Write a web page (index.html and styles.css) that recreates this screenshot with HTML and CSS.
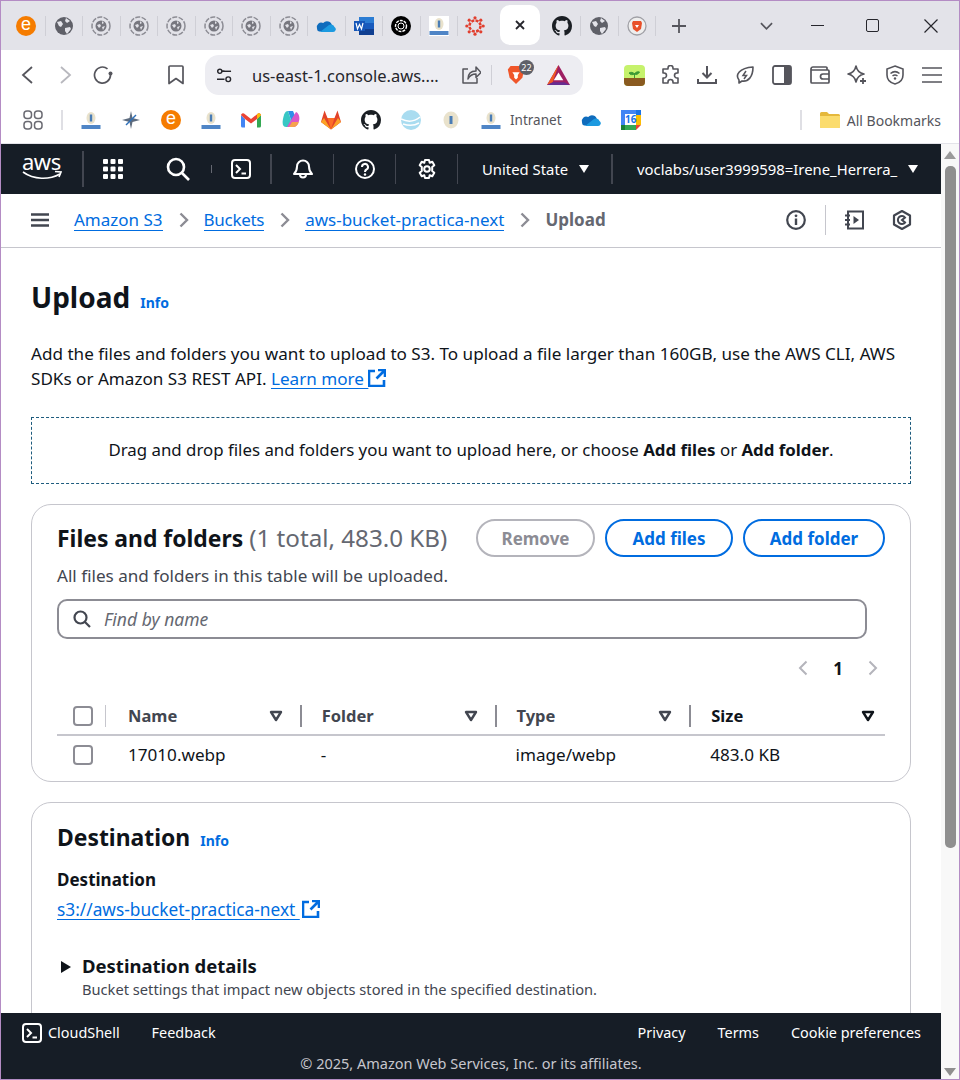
FILE: index.html
```html
<!DOCTYPE html>
<html>

<head>
    <meta charset="utf-8">
    <title>Upload</title>
    <link rel="stylesheet" href="styles.css">
</head>

<body>
    <svg class="sprites" width="0" height="0">
        <symbol id="globe" viewBox="0 0 20 20"><circle cx="10" cy="10" r="9" fill="#5f6068"/><path d="M3 6l4-1 2 3-2 3-2-1zM12 2l4 3-3 2-2-2zM11 12l5-1 1 2-4 5-2-3z" fill="#e3e3e9"/></symbol>
        <symbol id="sleep" viewBox="0 0 20 20"><circle cx="10" cy="10" r="9" fill="none" stroke="#8c8c94" stroke-width="1.500" stroke-dasharray="5 1.400"/><circle cx="10" cy="10" r="5.500" fill="#77777f"/><path d="M6 9l3-1 1 2-2 2zM11 5l2 2-2 1zM11 11l3-1-2 4z" fill="#e3e3e9"/></symbol>
        <symbol id="github" viewBox="0 0 16 16"><path fill="#1b1f24" d="M8 0C3.58 0 0 3.58 0 8c0 3.54 2.29 6.53 5.47 7.59.4.07.55-.17.55-.38 0-.19-.01-.82-.01-1.49-2.01.37-2.53-.49-2.69-.94-.09-.23-.48-.94-.82-1.13-.28-.15-.68-.52-.01-.53.63-.01 1.08.58 1.23.82.72 1.21 1.87.87 2.33.66.07-.52.28-.87.51-1.07-1.78-.2-3.64-.89-3.64-3.95 0-.87.31-1.59.82-2.15-.08-.2-.36-1.02.08-2.12 0 0 .67-.21 2.2.82.64-.18 1.32-.27 2-.27.68 0 1.36.09 2 .27 1.53-1.04 2.2-.82 2.2-.82.44 1.1.16 1.92.08 2.12.51.56.82 1.27.82 2.15 0 3.07-1.87 3.75-3.65 3.95.29.25.54.73.54 1.48 0 1.07-.01 1.93-.01 2.2 0 .21.15.46.55.38A8.013 8.013 0 0016 8c0-4.42-3.58-8-8-8z"/></symbol>
        <symbol id="onedrive" viewBox="0 0 20 14"><path fill="#0f6cbd" d="M8 12.500l8-6a5 5 0 0 0-8.800-2.500A4.500 4.500 0 0 0 1 9.500 3 3 0 0 0 3 12.500z"/><path fill="#1c9ae0" d="M4 13h13a2.700 2.700 0 0 0 1.500-5 4 4 0 0 0-5.500-2z"/></symbol>
        <symbol id="upm" viewBox="0 0 20 20"><rect width="20" height="20" fill="#fff"/><ellipse cx="10" cy="8" rx="4.500" ry="6" fill="#e9e2cc"/><rect x="8.800" y="4.500" width="2.400" height="7" fill="#4a7db5"/><rect x="0.500" y="15" width="19" height="4" fill="#4f85c6"/></symbol>
        <symbol id="crest" viewBox="0 0 20 20"><ellipse cx="10" cy="10" rx="7.500" ry="8.500" fill="#e9e2cc"/><rect x="8.500" y="6" width="3" height="8" fill="#4a7db5"/></symbol>
        <symbol id="shell" viewBox="0 0 20 20"><rect x="1" y="1" width="18" height="18" rx="3" fill="none" stroke="currentColor" stroke-width="2"/><path d="M5 6l4 4-4 4M10.500 14.500h4.500" fill="none" stroke="currentColor" stroke-width="2"/></symbol>
        <symbol id="external" viewBox="0 0 18 18"><path d="M7 2H1v15h15v-6M10 1h7v7M16.500 1.500L8.500 9.500" fill="none" stroke="#006ce0" stroke-width="2.600"/></symbol>
        <symbol id="sort" viewBox="0 0 14 12"><path d="M2 2h10l-5 8z" fill="none" stroke="currentColor" stroke-width="2.400" stroke-linejoin="round"/></symbol>
    </svg>

    <div class="browser">
        <div class="tabstrip">
            <div class="tab first"><span class="favicon-e">e</span></div>
            <div class="tab"><svg class="ico20"><use href="#globe"/></svg></div>
            <div class="tab"><svg class="ico20"><use href="#sleep"/></svg></div>
            <div class="tab"><svg class="ico20"><use href="#sleep"/></svg></div>
            <div class="tab"><svg class="ico20"><use href="#sleep"/></svg></div>
            <div class="tab"><svg class="ico20"><use href="#sleep"/></svg></div>
            <div class="tab"><svg class="ico20"><use href="#sleep"/></svg></div>
            <div class="tab"><svg class="ico20"><use href="#sleep"/></svg></div>
            <div class="tab"><svg class="ico20 short"><use href="#onedrive"/></svg></div>
            <div class="tab">
                <svg class="ico20" viewBox="0 0 20 20"><rect x="5" y="1" width="15" height="18" fill="#2b7cd3"/><rect x="5" y="7" width="15" height="6" fill="#185abd"/><rect x="5" y="13" width="15" height="6" fill="#103f91"/><rect x="0" y="5" width="11" height="10" fill="#1656b8"/><path d="M2 7l1.500 6 2-4.500 2 4.500L9 7" fill="none" stroke="#fff" stroke-width="1.200"/></svg>
            </div>
            <div class="tab">
                <svg class="ico20" viewBox="0 0 20 20"><circle cx="10" cy="10" r="10" fill="#000"/><circle cx="10" cy="10" r="5.500" fill="none" stroke="#fff" stroke-width="1.400" stroke-dasharray="3 1"/><circle cx="10" cy="10" r="3" fill="none" stroke="#fff"/></svg>
            </div>
            <div class="tab"><svg class="ico20"><use href="#upm"/></svg></div>
            <div class="tab no-line">
                <svg class="ico20" viewBox="0 0 20 20"><circle cx="10" cy="10" r="5.500" fill="none" stroke="#e13f2f" stroke-width="2.600" stroke-dasharray="3 1.300"/><circle cx="10" cy="1.800" r="1.600" fill="#e13f2f"/><circle cx="10" cy="18.200" r="1.600" fill="#e13f2f"/><circle cx="1.800" cy="10" r="1.600" fill="#e13f2f"/><circle cx="18.200" cy="10" r="1.600" fill="#e13f2f"/><circle cx="4.200" cy="4.200" r="1.600" fill="#e13f2f"/><circle cx="15.800" cy="4.200" r="1.600" fill="#e13f2f"/><circle cx="4.200" cy="15.800" r="1.600" fill="#e13f2f"/><circle cx="15.800" cy="15.800" r="1.600" fill="#e13f2f"/></svg>
            </div>
            <div class="tab active">
                <svg class="ico10" viewBox="0 0 10 10"><path d="M1 1l8 8M9 1l-8 8" stroke="#26262c" stroke-width="1.800"/></svg>
            </div>
            <div class="tab after-active"><svg class="ico20"><use href="#github"/></svg></div>
            <div class="tab"><svg class="ico20"><use href="#globe"/></svg></div>
            <div class="tab">
                <svg class="ico20" viewBox="0 0 20 20"><circle cx="10" cy="10" r="9" fill="#eee" stroke="#a0a0a6" stroke-width="1.300"/><path d="M6 5h8l1 2-1 6-4 3-4-3-1-6z" fill="#e8502a"/><path d="M8 9h4l-2 3z" fill="#fff"/></svg>
            </div>
            <div class="new-tab">
                <svg class="ico14" viewBox="0 0 14 14"><path d="M7 0v14M0 7h14" stroke="#55555c" stroke-width="1.800"/></svg>
            </div>
            <div class="window-controls">
                <svg class="win-chevron" viewBox="0 0 14 8"><path d="M1 1l6 6 6-6" fill="none" stroke="#55555c" stroke-width="1.800"/></svg>
                <span class="win-min"></span>
                <span class="win-max"></span>
                <svg class="win-close" viewBox="0 0 14 14"><path d="M.5.5l13 13M13.500.5l-13 13" stroke="#26262c" stroke-width="1.200"/></svg>
            </div>
        </div>

        <div class="toolbar">
            <div class="tool"><svg class="ico20" viewBox="0 0 20 20"><path d="M14 2L5 10l9 8" fill="none" stroke="#55555c" stroke-width="1.800"/></svg></div>
            <div class="tool"><svg class="ico20" viewBox="0 0 20 20"><path d="M6 2l9 8-9 8" fill="none" stroke="#b8b8be" stroke-width="1.800"/></svg></div>
            <div class="tool"><svg class="ico20" viewBox="0 0 20 20"><path d="M17.500 10a8 8 0 1 1-3-6.200" fill="none" stroke="#55555c" stroke-width="1.700"/><circle cx="17.500" cy="8.500" r="2" fill="#55555c"/></svg></div>
            <div class="tool bookmark-star"><svg class="ico20" viewBox="0 0 20 20"><path d="M4 1.500h12a1 1 0 0 1 1 1V19l-7-5-7 5V2.500a1 1 0 0 1 1-1z" fill="none" stroke="#55555c" stroke-width="1.700" stroke-linejoin="round" transform="translate(0 -.500)"/></svg></div>
            <div class="omnibox">
                <svg class="tune" viewBox="0 0 18 16"><path d="M1 3.500h8M1 12h8" stroke="#26262c" stroke-width="1.500" fill="none"/><circle cx="4" cy="3.500" r="2.200" fill="#ededf2" stroke="#26262c" stroke-width="1.500"/><circle cx="13" cy="12" r="2.500" fill="#ededf2" stroke="#26262c" stroke-width="1.500"/><path d="M6 3.500h10" stroke="#26262c" stroke-width="1.500"/></svg>
                <span class="url">us-east-1.console.aws....</span>
                <svg class="share" viewBox="0 0 20 20"><path d="M7 4H2v14h14v-5M7 14c0-5 3-8 8-8V2l5 5.500-5 5V9c-3 0-6 1-8 5z" fill="none" stroke="#55555c" stroke-width="1.500" stroke-linejoin="round"/></svg>
                <span class="omni-sep"></span>
                <div class="brave-shield">
                    <svg class="ico20 lion" viewBox="0 0 20 22"><path d="M4 1h12l3 4-2 9-7 7-7-7-2-9z" fill="#f0562a"/><path d="M6 8h8l-2 3v3l-2 2-2-2v-3z" fill="#fff"/></svg>
                    <span class="badge">22</span>
                </div>
                <svg class="bat" viewBox="0 0 24 21"><path d="M12 0l12 21H0z" fill="#9e1f63"/><path d="M12 0L0 21l6-3z" fill="#f15a22"/><path d="M0 21h24l-6-3H6z" fill="#662d91"/><path d="M12 8l5 8H7z" fill="#fff"/></svg>
            </div>
            <div class="forest">
                <svg class="ico20" viewBox="0 0 21 21"><rect width="21" height="21" rx="4" fill="#c6f26c"/><path d="M0 13h21v4a4 4 0 0 1-4 4H4a4 4 0 0 1-4-4z" fill="#8a5a20"/><path d="M10.500 13V8M10.500 9C9 7 6.500 7 5 8c1 2 4 2 5.500 1zM10.500 9c1-2 3-2.500 5-2-1 2-3 3-5 2z" fill="#3c9a35" stroke="#3c9a35"/></svg>
            </div>
            <div class="tool ext puzzle"><svg class="ico20" viewBox="0 0 20 20"><path d="M7 3a2.500 2.500 0 0 1 5 0v1h5v4h-1a2.500 2.500 0 0 0 0 5h1v5h-5v-1a2.500 2.500 0 0 0-5 0v1H2v-5h1a2.500 2.500 0 0 0 0-5H2V4h5z" fill="none" stroke="#55555c" stroke-width="1.600" stroke-linejoin="round"/></svg></div>
            <div class="tool ext"><svg class="ico20" viewBox="0 0 20 20"><path d="M10 1v11M5.500 8l4.500 4.500L14.500 8M1 14v4h18v-4" fill="none" stroke="#55555c" stroke-width="2"/></svg></div>
            <div class="tool ext"><svg class="ico20" viewBox="0 0 20 20"><path d="M4 15C0 10 4 3 18 2c0 10-5 15-11 14l-3 2z" fill="none" stroke="#55555c" stroke-width="1.600" stroke-linejoin="round"/><path d="M11 6l-3 4.500h3.500L9 14" fill="none" stroke="#55555c" stroke-width="1.500"/></svg></div>
            <div class="tool ext"><svg class="ico20" viewBox="0 0 20 20"><rect x="1" y="1" width="18" height="18" rx="2" fill="none" stroke="#55555c" stroke-width="1.800"/><rect x="12" y="1" width="7" height="18" fill="#55555c"/></svg></div>
            <div class="tool ext"><svg class="ico20" viewBox="0 0 20 20"><path d="M17 5V3a1 1 0 0 0-1-1H3a2 2 0 0 0-2 2v13a1 1 0 0 0 1 1h16a1 1 0 0 0 1-1V6a1 1 0 0 0-1-1H1M19 9h-6a2 2 0 0 0 0 5h6" fill="none" stroke="#55555c" stroke-width="1.700"/></svg></div>
            <div class="tool ext"><svg class="ico20" viewBox="0 0 20 20"><path d="M9 1c1 5 3 7 8 8-5 1-7 3-8 8-1-5-3-7-8-8 5-1 7-3 8-8z" fill="none" stroke="#55555c" stroke-width="1.600" stroke-linejoin="round"/><path d="M16 13v6M13 16h6" stroke="#55555c" stroke-width="1.800"/></svg></div>
            <div class="tool ext"><svg class="ico20" viewBox="0 0 20 20"><path d="M10 1l8 3v6c0 5-4 8-8 9-4-1-8-4-8-9V4z" fill="none" stroke="#55555c" stroke-width="1.600"/><path d="M5.500 8.500c3-2.500 6-2.500 9 0M7.500 11c1.500-1.200 3.500-1.200 5 0" fill="none" stroke="#55555c" stroke-width="1.500"/><circle cx="10" cy="13.500" r="1.200" fill="#55555c"/></svg></div>
            <div class="tool ext"><svg class="ico20" viewBox="0 0 20 20"><path d="M0 3h20M0 10h20M0 17h20" stroke="#55555c" stroke-width="1.700"/></svg></div>
        </div>

        <div class="bookmarks">
            <div class="apps">
                <svg class="ico20" viewBox="0 0 20 20"><g fill="none" stroke="#6a6a72" stroke-width="1.500"><rect x="1" y="1" width="7.500" height="7.500" rx="3"/><rect x="11.500" y="1" width="7.500" height="7.500" rx="3"/><rect x="1" y="11.500" width="7.500" height="7.500" rx="3"/><rect x="11.500" y="11.500" width="7.500" height="7.500" rx="3"/></g></svg>
            </div>
            <span class="bm-sep"></span>
            <div class="bm"><svg class="ico20"><use href="#upm"/></svg></div>
            <div class="bm"><svg class="ico20" viewBox="0 0 20 20"><path d="M10 1l1.500 7L19 10l-7.500 2L10 19l-1.500-7L1 10l7.500-2z" fill="#5d6b7e"/><path d="M5 15L15 5" stroke="#2d6fb8" stroke-width="1.500"/></svg></div>
            <div class="bm"><span class="favicon-e">e</span></div>
            <div class="bm"><svg class="ico20"><use href="#upm"/></svg></div>
            <div class="bm"><svg class="ico20" viewBox="0 0 20 16"><path d="M0 3v11a1.500 1.500 0 0 0 1.500 1.500H4V7z" fill="#4285f4"/><path d="M20 3v11a1.500 1.500 0 0 1-1.500 1.500H16V7z" fill="#34a853"/><path d="M0 3l4 4 6 4.500L16 7l4-4a2 2 0 0 0-3-1.500L10 7 3 1.500A2 2 0 0 0 0 3z" fill="#ea4335"/><path d="M16 7l4-4a2 2 0 0 0-3-1.500L16 2.300z" fill="#fbbc04"/></svg></div>
            <div class="bm"><svg class="ico20" viewBox="0 0 20 20"><path d="M7 1h5l4 9h-6z" fill="#2f8fe8"/><path d="M7 1C4 1 3 4 2 9c-1 5 0 8 3 8h3l2-7z" fill="#38c7c4"/><path d="M15 2c3 1 4 6 3 9-1 4-3 6-6 6H6l4-7z" fill="#d957c8"/><path d="M18 11c-1 4-3 6-6 6H8l3-5h7z" fill="#f6a34c"/></svg></div>
            <div class="bm"><svg class="ico20" viewBox="0 0 20 19"><path d="M10 19L0 11.500 3.500 0 6.500 7.500h7L16.500 0 20 11.500z" fill="#e24329"/><path d="M10 19l-3.500-11.500h7z" fill="#fc6d26"/><path d="M0 11.500L10 19 3 7.500z" fill="#fca326"/><path d="M20 11.500L10 19l7-11.500z" fill="#fca326"/></svg></div>
            <div class="bm"><svg class="ico20"><use href="#github"/></svg></div>
            <div class="bm"><svg class="ico20" viewBox="0 0 20 20"><circle cx="10" cy="10" r="10" fill="#a9dcf0"/><path d="M0 9c6 3 13 3 19-2M2 14c6 2 11 2 16-1" fill="none" stroke="#fff" stroke-width="1.500"/></svg></div>
            <div class="bm"><svg class="ico20"><use href="#crest"/></svg></div>
            <div class="bm intranet"><svg class="ico20"><use href="#upm"/></svg><span>Intranet</span></div>
            <div class="bm"><svg class="ico20 short"><use href="#onedrive"/></svg></div>
            <div class="bm calendar">
                <svg class="ico20" viewBox="0 0 20 20"><rect width="20" height="20" fill="#fff"/><path d="M0 0h15v4H4v12H0z" fill="#4285f4"/><path d="M15 0h5v5h-5z" fill="#1a73e8"/><path d="M15 5h5v10h-5z" fill="#fbbc04"/><path d="M4 15h11v5H4z" fill="#34a853"/><path d="M0 15h4v5H0z" fill="#188038"/><path d="M15 15h5l-5 5z" fill="#ea4335"/></svg>
                <span class="cal-num">16</span>
            </div>
            <span class="bm-sep right"></span>
            <svg class="folder" viewBox="0 0 20 16"><path d="M0 1.500A1.500 1.500 0 0 1 1.500 0H7l2 2h9.500A1.500 1.500 0 0 1 20 3.500v11a1.500 1.500 0 0 1-1.500 1.500h-17A1.500 1.500 0 0 1 0 14.500z" fill="#e5b83c"/><path d="M0 4h20v10.500a1.500 1.500 0 0 1-1.500 1.500h-17A1.500 1.500 0 0 1 0 14.500z" fill="#fbdc6e"/></svg>
            <span class="all-bookmarks">All Bookmarks</span>
        </div>

        <div class="viewport">
            <div class="page">
                <nav class="topnav">
                    <div class="aws-logo">
                        <span>aws</span>
                        <svg viewBox="0 0 40 11"><path d="M1 2c11 8 26 8 37 2" fill="none" stroke="#fff" stroke-width="1.600"/><path d="M33 1.500l6 .5-2 5" fill="none" stroke="#fff" stroke-width="1.600"/></svg>
                    </div>
                    <div class="nav-cell grid-cell">
                        <svg class="ico20" viewBox="0 0 20 20"><g fill="#fff"><rect width="5" height="5" rx="1"/><rect x="7.500" width="5" height="5" rx="1"/><rect x="15" width="5" height="5" rx="1"/><rect y="7.500" width="5" height="5" rx="1"/><rect x="7.500" y="7.500" width="5" height="5" rx="1"/><rect x="15" y="7.500" width="5" height="5" rx="1"/><rect y="15" width="5" height="5" rx="1"/><rect x="7.500" y="15" width="5" height="5" rx="1"/><rect x="15" y="15" width="5" height="5" rx="1"/></g></svg>
                    </div>
                    <div class="nav-search">
                        <svg class="search-big" viewBox="0 0 24 24"><circle cx="10" cy="10" r="8" fill="none" stroke="#fff" stroke-width="2.600"/><path d="M16 16l7 7" stroke="#fff" stroke-width="2.600"/></svg>
                        <span class="tiny-sep"></span>
                        <svg class="ico20 on-dark"><use href="#shell"/></svg>
                    </div>
                    <div class="nav-cell lined">
                        <svg class="ico20" viewBox="0 0 20 20"><path d="M10 1.500a6 6 0 0 1 6 6c0 4 1 5.500 3 7.500H1c2-2 3-3.500 3-7.500a6 6 0 0 1 6-6zM7 15.500a3 3 0 0 0 6 0" fill="none" stroke="#fff" stroke-width="2" stroke-linejoin="round"/></svg>
                    </div>
                    <div class="nav-cell lined">
                        <svg class="ico20" viewBox="0 0 20 20"><circle cx="10" cy="10" r="9" fill="none" stroke="#fff" stroke-width="2"/><path d="M7 8a3 3 0 1 1 4.500 2.500C10.500 11 10 11.500 10 13" fill="none" stroke="#fff" stroke-width="2"/><circle cx="10" cy="15.500" r="1.200" fill="#fff"/></svg>
                    </div>
                    <div class="nav-cell lined">
                        <svg class="ico20" viewBox="0 0 20 20"><path d="M8 1h4l.7 2.800 2.600-1 2 3.400-2.100 1.800v4l2.100 1.800-2 3.400-2.600-1L12 19H8l-.7-2.800-2.600 1-2-3.400L4.800 12V8L2.700 6.200l2-3.400 2.600 1z" fill="none" stroke="#fff" stroke-width="2" stroke-linejoin="round"/><circle cx="10" cy="10" r="2.800" fill="none" stroke="#fff" stroke-width="2"/></svg>
                    </div>
                    <div class="nav-menu region">
                        <span>United State</span><i class="nav-caret"></i>
                    </div>
                    <div class="nav-menu user">
                        <span>voclabs/user3999598=Irene_Herrera_</span><i class="nav-caret"></i>
                    </div>
                </nav>

                <div class="crumbbar">
                    <svg class="burger" viewBox="0 0 18 14"><path d="M0 1.500h18M0 7h18M0 12.500h18" stroke="#424650" stroke-width="2.400"/></svg>
                    <a class="crumb">Amazon S3</a>
                    <svg class="crumb-arrow" viewBox="0 0 10 16"><path d="M1.500 1.500L8 8l-6.500 6.500" fill="none" stroke="#8c8c94" stroke-width="2.400"/></svg>
                    <a class="crumb tight">Buckets</a>
                    <svg class="crumb-arrow" viewBox="0 0 10 16"><path d="M1.500 1.500L8 8l-6.500 6.500" fill="none" stroke="#8c8c94" stroke-width="2.400"/></svg>
                    <a class="crumb">aws-bucket-practica-next</a>
                    <svg class="crumb-arrow" viewBox="0 0 10 16"><path d="M1.500 1.500L8 8l-6.500 6.500" fill="none" stroke="#8c8c94" stroke-width="2.400"/></svg>
                    <span class="crumb-current">Upload</span>
                    <div class="crumb-tools">
                        <svg class="ico20" viewBox="0 0 20 20"><circle cx="10" cy="10" r="8.800" fill="none" stroke="#424650" stroke-width="2.200"/><path d="M10 8.500V15" stroke="#424650" stroke-width="2.400"/><circle cx="10" cy="5.800" r="1.400" fill="#424650"/></svg>
                        <span class="tools-sep"></span>
                        <svg class="ico20 notebook" viewBox="0 0 20 20"><path d="M3 1.500h15v17H3zM0 5.500h5M0 10h5M0 14.500h5" fill="none" stroke="#424650" stroke-width="2"/><path d="M8.500 6l5.500 4-5.500 4z" fill="#424650"/></svg>
                        <svg class="ico20 hexagon" viewBox="0 0 20 20"><path d="M10 1l8 4.500v9L10 19l-8-4.500v-9z" fill="none" stroke="#424650" stroke-width="2.200" stroke-linejoin="round"/><path d="M13 7.500a4 4 0 1 0 0 5l-3-2.500z" fill="none" stroke="#424650" stroke-width="2"/></svg>
                    </div>
                </div>

                <main class="content">
                    <div class="page-title">
                        <h1>Upload</h1>
                        <a class="info">Info</a>
                    </div>
                    <p class="intro">Add the files and folders you want to upload to S3. To upload a file larger than 160GB, use the AWS CLI, AWS SDKs or Amazon S3 REST API. <a class="link">Learn more <svg class="external"><use href="#external"/></svg></a></p>

                    <div class="dropzone">Drag and drop files and folders you want to upload here, or choose <b>Add files</b> or <b>Add folder</b>.</div>

                    <section class="card files-card">
                        <div class="card-head">
                            <h2>Files and folders <span class="count">(1 total, 483.0 KB)</span></h2>
                            <div class="actions">
                                <button class="btn disabled">Remove</button>
                                <button class="btn files">Add files</button>
                                <button class="btn folder-btn">Add folder</button>
                            </div>
                        </div>
                        <p class="card-sub">All files and folders in this table will be uploaded.</p>
                        <div class="search-box">
                            <svg class="search-ico" viewBox="0 0 18 18"><circle cx="7.500" cy="7.500" r="6" fill="none" stroke="#424650" stroke-width="2.200"/><path d="M12 12l5 5" stroke="#424650" stroke-width="2.200"/></svg>
                            <span>Find by name</span>
                        </div>
                        <div class="pager">
                            <svg class="pager-arrow" viewBox="0 0 10 16"><path d="M8.500 1.500L2 8l6.500 6.500" fill="none" stroke="#b4b4bb" stroke-width="2"/></svg>
                            <b>1</b>
                            <svg class="pager-arrow" viewBox="0 0 10 16"><path d="M1.500 1.500L8 8l-6.500 6.500" fill="none" stroke="#b4b4bb" stroke-width="2"/></svg>
                        </div>
                        <div class="table-row head">
                            <div class="check-cell"><span class="checkbox"></span></div>
                            <div class="th">Name<svg class="sort"><use href="#sort"/></svg></div>
                            <div class="th lined">Folder<svg class="sort"><use href="#sort"/></svg></div>
                            <div class="th lined">Type<svg class="sort"><use href="#sort"/></svg></div>
                            <div class="th lined dark">Size<svg class="sort"><use href="#sort"/></svg></div>
                        </div>
                        <div class="table-row">
                            <div class="check-cell plain"><span class="checkbox"></span></div>
                            <div class="td name-cell">17010.webp</div>
                            <div class="td">-</div>
                            <div class="td">image/webp</div>
                            <div class="td">483.0 KB</div>
                        </div>
                    </section>

                    <section class="card dest-card">
                        <div class="page-title small">
                            <h2>Destination</h2>
                            <a class="info">Info</a>
                        </div>
                        <div class="field-label">Destination</div>
                        <a class="link dest-link">s3://aws-bucket-practica-next <svg class="external"><use href="#external"/></svg></a>
                        <div class="expander">
                            <i class="expander-caret"></i>
                            <div>
                                <h3>Destination details</h3>
                                <p>Bucket settings that impact new objects stored in the specified destination.</p>
                            </div>
                        </div>
                    </section>
                </main>

                <footer class="footer">
                    <div class="footer-row">
                        <svg class="ico20 on-dark"><use href="#shell"/></svg>
                        <span class="foot-shell">CloudShell</span>
                        <span>Feedback</span>
                        <span class="foot-right">Privacy</span>
                        <span>Terms</span>
                        <span>Cookie preferences</span>
                    </div>
                    <div class="copyright">© 2025, Amazon Web Services, Inc. or its affiliates.</div>
                </footer>
            </div>

            <div class="scrollbar">
                <i class="scroll-up"></i>
                <div class="thumb"></div>
                <i class="scroll-down"></i>
            </div>
        </div>
    </div>
</body>

</html>
```

FILE: styles.css
```css
* {
    box-sizing: border-box;
}

html, body {
    margin: 0;
    height: 1080px;
    overflow: hidden;
    background: #fff;
}

body {
    font-family: "Noto Sans", sans-serif;
    color: #0f141a;
}

.sprites {
    position: absolute;
}

.browser {
    width: 960px;
    height: 1080px;
    display: flex;
    flex-direction: column;
    border: 1px solid #b48cc4;
    overflow: hidden;
}

.ico20 {
    width: 20px;
    height: 20px;
    flex: none;
}

.ico20.short {
    height: 14px;
}

.ico10 {
    width: 10px;
    height: 10px;
}

.ico14 {
    width: 14px;
    height: 14px;
}

.on-dark {
    color: #fff;
}

/* tabs */
.tabstrip {
    height: 49px;
    flex: none;
    background: #e3e3e9;
    display: flex;
    align-items: center;
    padding-left: 6px;
}

.tab {
    width: 37.5px;
    height: 20px;
    flex: none;
    display: flex;
    align-items: center;
    justify-content: center;
    border-right: 1px solid #cfcfd6;
}

.tab.first {
    width: 38.5px;
    justify-content: flex-start;
    padding-left: 9px;
}

.tab.no-line {
    border-right: 0;
    width: 42px;
    justify-content: flex-start;
    padding-left: 7px;
}

.tab.active {
    width: 40px;
    height: 40px;
    background: #fff;
    border-radius: 10px;
    border-right: 0;
    margin: -1px 3px 0 0;
}

.tab.after-active {
    width: 38px;
}

.new-tab {
    margin-left: 16px;
    display: flex;
}

.window-controls {
    margin-left: auto;
    display: flex;
    align-items: center;
    padding-right: 21px;
}

.win-chevron {
    width: 13px;
    height: 8px;
    margin-right: 38px;
}

.win-min {
    width: 13px;
    border-top: 1.5px solid #26262c;
    margin-right: 42px;
}

.win-max {
    width: 13px;
    height: 13px;
    border: 1.5px solid #26262c;
    border-radius: 2px;
    margin-right: 45px;
}

.win-close {
    width: 14px;
    height: 14px;
}

.favicon-e {
    width: 20px;
    height: 20px;
    border-radius: 50%;
    background: #f57c00;
    color: #fff;
    font-size: 18px;
    line-height: 17px;
    text-align: center;
    font-family: "Liberation Sans", sans-serif;
    flex: none;
}

/* toolbar */
.toolbar {
    height: 50px;
    flex: none;
    background: #fff;
    display: flex;
    align-items: center;
    padding-left: 8px;
}

.tool {
    width: 37.5px;
    display: flex;
    justify-content: center;
}

.bookmark-star {
    margin-left: 36px;
}

.omnibox {
    width: 378px;
    height: 40px;
    margin-left: 10px;
    background: #ededf2;
    border-radius: 14px;
    display: flex;
    align-items: center;
    padding-left: 11px;
}

.tune {
    width: 17px;
    height: 15px;
}

.url {
    margin-left: 19px;
    width: 204px;
    font-size: 16.5px;
    white-space: nowrap;
    color: #26262c;
}

.share {
    width: 20px;
    height: 20px;
    margin-left: 5px;
}

.omni-sep {
    width: 1px;
    height: 20px;
    background: #cfcfd6;
    margin-left: 10px;
}

.brave-shield {
    position: relative;
    margin-left: 14px;
    display: flex;
}

.badge {
    position: absolute;
    left: 13px;
    top: -5px;
    width: 15px;
    height: 15px;
    border-radius: 50%;
    background: #5f6068;
    color: #fff;
    font-size: 9px;
    line-height: 15px;
    text-align: center;
}

.bat {
    width: 23px;
    height: 20px;
    margin-left: 21px;
}

.forest {
    margin-left: 41px;
    display: flex;
    margin-right: 9px;
}

.forest .ico20 {
    width: 21px;
    height: 21px;
}

.tool.ext {
    width: 37.5px;
}

.tool.puzzle {
    width: 34.5px;
    padding-right: 1px;
}

/* bookmarks row */
.bookmarks {
    height: 44px;
    flex: none;
    background: #fff;
    border-bottom: 1px solid #e3e3e9;
    display: flex;
    align-items: center;
    padding: 0 18px 3px 22px;
}

.apps {
    display: flex;
}

.bm-sep {
    width: 2px;
    height: 20px;
    background: #dfdfe4;
    margin: 0 8px 0 18px;
}

.bm-sep.right {
    margin: 0 18px 0 auto;
}

.bm {
    width: 40px;
    flex: none;
    display: flex;
    align-items: center;
    justify-content: center;
}

.bm.intranet {
    width: 100px;
    justify-content: flex-start;
    gap: 9px;
    padding-left: 10px;
    font-size: 13.5px;
    color: #55555c;
}

.calendar {
    position: relative;
}

.cal-num {
    position: absolute;
    left: 14px;
    top: 4px;
    font-size: 10px;
    font-weight: 700;
    line-height: 11px;
    color: #1a73e8;
}

.folder {
    width: 20px;
    height: 16px;
    flex: none;
}

.all-bookmarks {
    font-size: 14px;
    color: #55555c;
    margin-left: 7px;
    white-space: nowrap;
}

/* page */
.viewport {
    flex: 1;
    min-height: 0;
    display: flex;
}

.page {
    width: 940px;
    flex: none;
    display: flex;
    flex-direction: column;
    min-height: 0;
}

.topnav {
    height: 50px;
    flex: none;
    background: #161d26;
    color: #fff;
    display: flex;
    align-items: center;
    font-size: 14.85px;
}

.aws-logo {
    width: 83px;
    height: 36px;
    padding-left: 21px;
    border-right: 2px solid #424650;
    display: flex;
    flex-direction: column;
    line-height: 24px;
    position: relative;
}

.aws-logo span {
    font-size: 22px;
    letter-spacing: -0.5px;
    line-height: 20px;
}

.aws-logo svg {
    width: 40px;
    height: 11px;
    margin-top: -1px;
}

.nav-cell {
    width: 62px;
    height: 30px;
    display: flex;
    align-items: center;
    justify-content: center;
    flex: none;
}

.nav-cell.lined {
    border-right: 1px solid #424650;
}

.grid-cell {
    width: 58px;
}

.nav-search {
    width: 130px;
    height: 30px;
    flex: none;
    display: flex;
    align-items: center;
    border-right: 2px solid #424650;
}

.search-big {
    width: 24px;
    height: 24px;
    margin-left: 24px;
}

.tiny-sep {
    width: 1px;
    height: 8px;
    background: #656871;
    margin: 0 19px 0 21px;
}

.nav-menu {
    height: 30px;
    display: flex;
    align-items: center;
    white-space: nowrap;
}

.nav-caret {
    width: 0;
    height: 0;
    border: 5.5px solid transparent;
    border-top: 8px solid #fff;
    border-bottom: 0;
}

.region {
    width: 155px;
    padding-left: 24px;
    border-right: 2px solid #424650;
}

.region .nav-caret {
    margin-left: 11px;
}

.user {
    padding-left: 24px;
}

.user .nav-caret {
    margin-left: 11px;
}

.crumbbar {
    height: 54px;
    flex: none;
    border-bottom: 1px solid #c6c6cd;
    display: flex;
    align-items: center;
    padding: 0 0 2px 30px;
    font-size: 17px;
}

.burger {
    width: 18px;
    height: 14px;
    margin-right: 25px;
}

.crumb {
    color: #006ce0;
    border-bottom: 1.5px solid #006ce0;
    line-height: 21px;
    white-space: nowrap;
}

.crumb.tight {
    letter-spacing: -0.3px;
}

.crumb-arrow {
    width: 10px;
    height: 16px;
    margin: 0 15px 0 16px;
}

.crumb-current {
    color: #656871;
    font-weight: 700;
}

.crumb-tools {
    margin-left: auto;
    display: flex;
    align-items: center;
    padding-right: 29px;
}

.tools-sep {
    width: 1px;
    height: 30px;
    background: #c6c6cd;
    margin: 0 19px;
}

.hexagon {
    margin-left: 27px;
}

.content {
    flex: 1;
    min-height: 0;
    overflow: hidden;
    padding: 0 30px;
}

.page-title {
    display: flex;
    align-items: baseline;
    gap: 10px;
    margin-top: 29px;
    height: 40px;
}

h1 {
    margin: 0;
    font-size: 28px;
    line-height: 40px;
    font-weight: 700;
}

.info {
    color: #006ce0;
    font-size: 14px;
    font-weight: 700;
}

.intro {
    margin: 24px 0 0;
    font-size: 17.1px;
    line-height: 25px;
}

.link {
    color: #006ce0;
    text-decoration: underline;
    text-underline-offset: 3px;
}

.external {
    width: 18px;
    height: 18px;
    vertical-align: -2px;
}

.dest-link .external {
    margin-left: 2px;
}

.dropzone {
    margin-top: 26px;
    height: 67px;
    border: 1px dashed #1d5b7d;
    text-align: center;
    font-size: 16.85px;
    line-height: 64px;
}

.card {
    border: 1px solid #c6c6cd;
    border-radius: 20px;
    padding: 0 25px 0 25px;
    background: #fff;
}

.files-card {
    margin-top: 20px;
    height: 278px;
    padding-top: 14px;
}

.card-head {
    display: flex;
    justify-content: space-between;
    align-items: center;
    height: 38px;
}

.card-head h2 {
    margin-top: -2px;
}

h2 {
    margin: 0;
    font-size: 22.9px;
    font-weight: 700;
    white-space: nowrap;
}

.count {
    font-size: 24.2px;
    font-weight: 400;
    color: #656871;
}

.actions {
    display: flex;
    gap: 10px;
}

.btn {
    height: 38px;
    border: 2px solid #006ce0;
    border-radius: 19px;
    background: #fff;
    color: #006ce0;
    font-family: inherit;
    font-size: 17px;
    font-weight: 700;
    padding: 0;
}

.btn.disabled {
    width: 119px;
    border-color: #b4b4bb;
    color: #8c8c94;
}

.btn.files {
    width: 128px;
}

.btn.folder-btn {
    width: 142px;
}

.card-sub {
    margin: 7px 0 0;
    font-size: 17.1px;
    line-height: 24px;
    color: #424650;
}

.search-box {
    width: 810px;
    height: 40px;
    margin-top: 11px;
    border: 2px solid #8c8c94;
    border-radius: 10px;
    display: flex;
    align-items: center;
    padding-left: 14px;
    font-size: 17.5px;
    font-style: italic;
    color: #656871;
}

.search-ico {
    width: 18px;
    height: 18px;
    margin-right: 13px;
}

.pager {
    height: 20px;
    margin-top: 19px;
    display: flex;
    align-items: center;
    justify-content: flex-end;
    padding-right: 7px;
    gap: 25px;
    font-size: 17px;
}

.pager-arrow {
    width: 10px;
    height: 16px;
}

.table-row {
    display: grid;
    grid-template-columns: 49px repeat(4, 1fr);
    align-items: center;
    font-size: 17.1px;
}

.table-row.head {
    height: 31px;
    margin-top: 27px;
    border-bottom: 2px solid #c6c6cd;
    font-size: 16.5px;
    font-weight: 700;
    color: #424650;
    align-items: start;
}

.check-cell {
    height: 22px;
    padding-left: 16px;
    border-right: 1px solid #c6c6cd;
    display: flex;
    align-items: center;
}

.check-cell.plain {
    border-right: 0;
}

.checkbox {
    width: 20px;
    height: 20px;
    border: 2px solid #8c8c94;
    border-radius: 4px;
    display: block;
}

.th {
    height: 22px;
    display: flex;
    align-items: center;
    justify-content: space-between;
    padding: 0 17px 0 22px;
    line-height: 22px;
}

.th.lined {
    border-left: 2px solid #8c8c94;
    margin-left: -1px;
    padding-left: 20px;
}

.th.dark {
    color: #0f141a;
    padding-right: 9px;
}

.sort {
    width: 14px;
    height: 12px;
    margin-right: 1px;
}

.td {
    padding-left: 20px;
    line-height: 38px;
}

.td.name-cell {
    padding-left: 22px;
}

.dest-card {
    margin-top: 20px;
    height: 260px;
    padding-top: 19px;
}

.page-title.small {
    margin-top: 0;
    height: 34px;
}

.field-label {
    margin-top: 11px;
    font-size: 17px;
    font-weight: 700;
    line-height: 25px;
}

.dest-link {
    display: inline-block;
    font-size: 17.3px;
    line-height: 25px;
    margin-top: 5px;
}

.expander {
    display: flex;
    margin-top: 31px;
    padding-left: 4px;
}

.expander-caret {
    width: 0;
    height: 0;
    margin: 8px 11px 0 0;
    border: 6px solid transparent;
    border-left: 10px solid #0f141a;
    border-right: 0;
}

h3 {
    margin: 0;
    font-size: 18.5px;
    line-height: 26px;
    font-weight: 700;
}

.expander p {
    margin: 0;
    font-size: 14.67px;
    line-height: 20px;
    color: #424650;
}

.footer {
    height: 66px;
    flex: none;
    background: #161d26;
    color: #fff;
    font-size: 14.4px;
    position: relative;
    z-index: 1;
}

.footer-row {
    display: flex;
    align-items: center;
    height: 39px;
    padding: 0 20px 0 21px;
    gap: 32px;
}

.foot-shell {
    margin-left: -26px;
}

.foot-right {
    margin-left: auto;
}

.copyright {
    text-align: center;
    color: #c6c6cd;
    font-size: 14.5px;
    line-height: 22px;
}

/* scrollbar */
.scrollbar {
    flex: 1;
    background: #f8f8f8;
    display: flex;
    flex-direction: column;
    align-items: center;
    padding: 7px 0 3px;
    position: relative;
}

.thumb {
    width: 11px;
    height: 682px;
    margin-top: 7px;
    background: #8f8f8f;
    border-radius: 5px;
}

.scroll-up {
    width: 0;
    height: 0;
    border: 6px solid transparent;
    border-bottom: 8px solid #9a9a9a;
    border-top: 0;
}

.scroll-down {
    margin-top: auto;
    width: 0;
    height: 0;
    border: 6px solid transparent;
    border-top: 8px solid #8f8f8f;
    border-bottom: 0;
}
```
